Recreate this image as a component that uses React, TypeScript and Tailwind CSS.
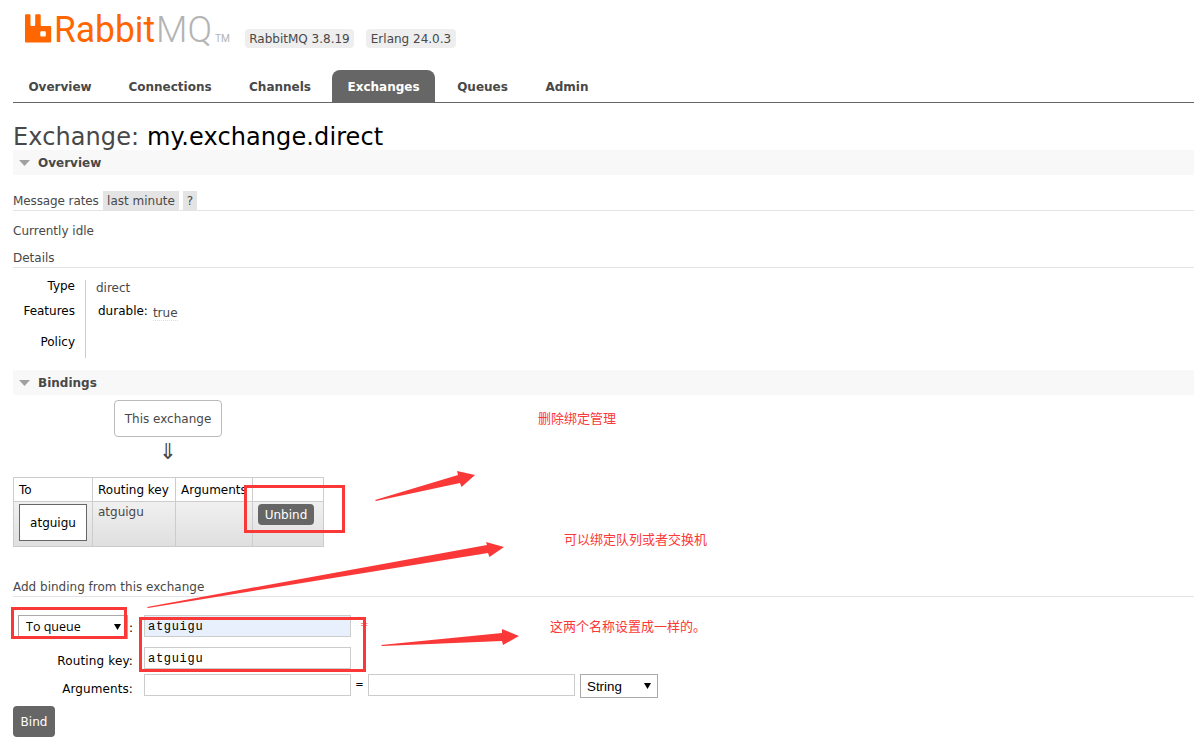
import React from "react";

const tabs = [
  { name: "Overview", width: "w-[94px]" },
  { name: "Connections", width: "w-[116px]" },
  { name: "Channels", width: "w-[94px]" },
  { name: "Exchanges", width: "w-[103px]" },
  { name: "Queues", width: "w-[85px]" },
  { name: "Admin", width: "w-[74px]" },
];

const Logo: React.FC = () => (
  <svg width="208" height="52" viewBox="0 -10 208 52" className="shrink-0">
    <path
      fill="#ff6600"
      fillRule="evenodd"
      d="M1 0.300h3.500q1 0 1 1v9.700q0 1 1 1h2.700q1 0 1-1v-9.700q0-1 1-1h3.500q1 0 1 1v9.700q0 1 1 1h8.500q1 0 1 1v14.500q0 1-1 1h-24.200q-1 0-1-1v-26.200q0-1 1-1zM16.300 17.200q-1 0-1 1v3.400q0 1 1 1h3.500q1 0 1-1v-3.400q0-1-1-1z"
    />
    <text
      x="29"
      y="28"
      fontSize="37.500"
      fill="#ff6600"
      fontFamily="Roboto, sans-serif"
      textLength="101"
      lengthAdjust="spacingAndGlyphs"
    >
      Rabbit
    </text>
    <text
      x="131"
      y="28"
      fontSize="37.500"
      fill="#b4b4b4"
      fontFamily="Roboto, sans-serif"
      fontWeight="300"
      textLength="56"
      lengthAdjust="spacingAndGlyphs"
    >
      MQ
    </text>
    <text
      x="190"
      y="28"
      fontSize="10"
      fill="#b4b4b4"
      fontFamily="Roboto, sans-serif"
      textLength="15"
      lengthAdjust="spacingAndGlyphs"
    >
      TM
    </text>
  </svg>
);

const SectionBar: React.FC<{ title: string }> = ({ title }) => (
  <h2 className="flex h-[25px] items-center bg-[#f8f8f8] pl-[6px] text-[12px] font-bold">
    <svg width="11" height="6" viewBox="0 0 11 6" className="mr-[8px]">
      <path d="M0 0h11L5.5 6z" fill="#a0a0a0" />
    </svg>
    <span>{title}</span>
  </h2>
);

const Annotations: React.FC = () => (
  <div className="pointer-events-none absolute inset-0 font-['Noto_Sans_CJK_SC',sans-serif] text-[13px] leading-[18px] text-[#fb3838]">
    <div className="absolute left-[244px] top-[485px] h-[48px] w-[101px] border-3 border-[#fb3838]" />
    <div className="absolute left-[11px] top-[607px] h-[32px] w-[116px] border-3 border-[#fb3838]" />
    <div className="absolute left-[139px] top-[617px] h-[55px] w-[227px] border-3 border-[#fb3838]" />
    <svg width="1194" height="749" className="absolute inset-0" fill="#fb3838">
      <path d="M375 500L458 475L457 471L475 475L461.500 487L460 483L376 501z" />
      <path d="M147 607L487 545L486 542L504 547L489.500 557L488 553L148 608z" />
      <path d="M381 645L502 633L502 629L519 636L503 645L502 641L382 646z" />
    </svg>
    <p className="absolute left-[538px] top-[409px]">删除绑定管理</p>
    <p className="absolute left-[564px] top-[530px]">可以绑定队列或者交换机</p>
    <p className="absolute left-[550px] top-[617px]">这两个名称设置成一样的。</p>
  </div>
);

const App: React.FC = () => {
  return (
    <div className="relative h-[749px] w-[1194px] overflow-hidden bg-white pl-[13px] font-['DejaVu_Sans',sans-serif] text-[12px] leading-[16px] text-[#484848]">
      <header className="flex h-[70px] items-start pl-[12px] pt-[4px]">
        <Logo />
        <span className="ml-[12px] mt-[25px] flex h-[19px] w-[109px] items-center justify-center whitespace-nowrap rounded-[4px] bg-[#eee]">
          RabbitMQ 3.8.19
        </span>
        <span className="ml-[12px] mt-[25px] flex h-[19px] w-[90px] items-center justify-center whitespace-nowrap rounded-[4px] bg-[#eee]">
          Erlang 24.0.3
        </span>
      </header>

      <nav className="flex h-[33px] gap-[5px] border-b border-[#666]">
        {tabs.map((tab) => (
          <a
            key={tab.name}
            className={`flex items-center justify-center pt-px text-[12px] font-bold ${
              tab.width
            } ${
              tab.name === "Exchanges"
                ? "rounded-t-[8px] bg-[#666] text-white"
                : ""
            }`}
          >
            {tab.name}
          </a>
        ))}
      </nav>

      <h1 className="mt-[20px] h-[27px] whitespace-nowrap text-[24px] leading-[28px] tracking-[0.1px]">
        Exchange: <b className="font-normal text-black">my.exchange.direct</b>
      </h1>
      <SectionBar title="Overview" />

      <div className="mt-[16px] flex h-[20px] items-center border-b border-[#e4e4e4]">
        <span className="w-[90px] whitespace-nowrap tracking-[-0.1px]">Message rates</span>
        <span className="flex h-[19px] w-[76px] items-center justify-center whitespace-nowrap bg-[#e4e4e4]">
          last minute
        </span>
        <span className="ml-[4px] flex h-[19px] w-[14px] items-center justify-center bg-[#e4e4e4]">
          ?
        </span>
      </div>
      <p className="mt-[12px]">Currently idle</p>
      <h3 className="mt-[11px] h-[18px] border-b border-[#e4e4e4]">Details</h3>

      <div className="mt-[12px] flex h-[78px]">
        <div className="w-[73px] border-r border-[#ccc] pr-[10px] text-right text-black">
          <p className="mt-[-2px]">Type</p>
          <p className="mt-[9px]">Features</p>
          <p className="mt-[15px]">Policy</p>
        </div>
        <div className="pl-[10px]">
          <p>direct</p>
          <div className="mt-[7px] flex pl-[2px]">
            <span className="text-black">durable:</span>
            <span className="ml-[5px] mt-[2px] h-[16px] border-b border-dotted border-[#ddd] leading-[16px]">
              true
            </span>
          </div>
        </div>
      </div>

      <div className="mt-[12px]">
        <SectionBar title="Bindings" />
      </div>
      <div className="mt-[5px] flex w-[310px] flex-col items-center">
        <div className="flex h-[37px] w-[108px] items-center justify-center whitespace-nowrap rounded-[4px] border border-[#bbb]">
          This exchange
        </div>
        <span className="h-[40px] pt-[4px] text-[22px] leading-[22px]">⇓</span>
      </div>

      <table className="w-[311px] table-fixed border-collapse whitespace-nowrap text-left">
        <thead>
          <tr className="h-[24px] text-black">
            <th className="w-[79px] border border-[#ccc] pl-[5px] font-normal">To</th>
            <th className="w-[83px] border border-[#ccc] pl-[5px] font-normal">Routing key</th>
            <th className="w-[77px] border border-[#ccc] pl-[5px] font-normal">Arguments</th>
            <th className="border border-[#ccc]" />
          </tr>
        </thead>
        <tbody>
          <tr className="h-[45px] bg-linear-to-b from-[#f0f0f0] to-[#dfdfdf] align-top">
            <td className="border border-[#ccc] pl-[5px] pt-[2px]">
              <div className="flex h-[37px] w-[68px] items-center justify-center border border-[#666] bg-white text-black">
                atguigu
              </div>
            </td>
            <td className="border border-[#ccc] pl-[5px] pt-[2px]">atguigu</td>
            <td className="border border-[#ccc]" />
            <td className="border border-[#ccc] pl-[5px] pt-[2px]">
              <button className="block h-[21px] w-[56px] rounded-[4px] bg-[#666] text-white">
                Unbind
              </button>
            </td>
          </tr>
        </tbody>
      </table>

      <h3 className="mt-[32px] h-[18px] border-b border-[#e4e4e4]">
        Add binding from this exchange
      </h3>

      <form className="text-black">
        <div className="flex h-[50px] pt-[18px]">
          <div className="ml-[5px] flex h-[24px] w-[110px] items-center justify-between border border-[#a9a9a9] pl-[7px] pr-[6px] font-['Open_Sans',sans-serif] text-[12.5px]">
            To queue
            <svg width="7" height="6" viewBox="0 0 7 6">
              <path d="M0 0h7L3.500 6z" />
            </svg>
          </div>
          <span className="ml-[1px] mt-[5px] w-[15px]">:</span>
          <input
            className="h-[22px] w-[207px] border border-[#ccc] bg-[#e8f0fe] px-[3px] pt-[2px] font-['Liberation_Mono',monospace] text-[12px] tracking-[0.7px]"
            defaultValue="atguigu"
          />
          <span className="ml-[9px] mt-[2px] text-[10px] text-[#f88]">=</span>
        </div>
        <div className="flex h-[27px]">
          <label className="mr-[11px] mt-[6px] w-[120px] text-right tracking-[0.15px]">Routing key:</label>
          <input
            className="h-[22px] w-[207px] border border-[#ccc] px-[3px] pt-[2px] font-['Liberation_Mono',monospace] text-[12px] tracking-[0.7px]"
            defaultValue="atguigu"
          />
        </div>
        <div className="flex h-[32px]">
          <label className="mr-[11px] mt-[7px] w-[120px] text-right tracking-[0.1px]">Arguments:</label>
          <input className="h-[22px] w-[207px] border border-[#ccc]" />
          <span className="mt-[3px] w-[17px] text-center text-[10px]">=</span>
          <input className="h-[22px] w-[207px] border border-[#ccc]" />
          <div className="ml-[5px] flex h-[24px] w-[78px] items-center justify-between border border-[#a9a9a9] pl-[6px] pr-[6px] font-['Liberation_Sans',sans-serif] text-[13.33px]">
            <span className="pt-[2px]">String</span>
            <svg width="7" height="6" viewBox="0 0 7 6">
              <path d="M0 0h7L3.500 6z" />
            </svg>
          </div>
        </div>
        <button type="button" className="block h-[31px] w-[42px] rounded-[4px] bg-[#666] text-white">
          Bind
        </button>
      </form>

      <Annotations />
    </div>
  );
};

export default App;
